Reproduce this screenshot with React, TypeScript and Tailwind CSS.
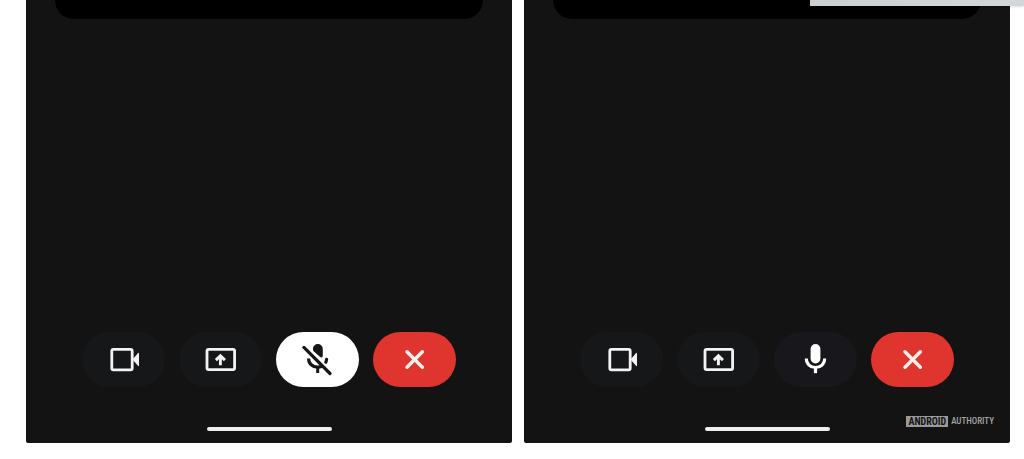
import React from 'react';
import clsx from 'clsx';

const iconClass = 'h-[31px] w-[33px] overflow-visible';

const CameraIcon = () => (
  <svg viewBox="0 0 33 31" className={iconClass} fill="none" aria-hidden="true">
    <rect x="4.8" y="5.3" width="20.4" height="20.6" rx="1.6" stroke="currentColor" strokeWidth="2.8" />
    <path d="M25.5 15.5L31 9.2Q32 8.3 32 9.6V21.4Q32 22.7 31 21.8Z" fill="currentColor" />
  </svg>
);

const PresentIcon = () => (
  <svg viewBox="0 0 33 31" className={iconClass} fill="none" stroke="currentColor" aria-hidden="true">
    <rect x="3" y="5.4" width="27.6" height="20.2" rx="1.6" strokeWidth="2.8" />
    <path d="M16.4 21.2V12.2M11.9 16.1L16.4 11.7L20.9 16.1" strokeWidth="2.9" />
  </svg>
);

const MicIcon = () => (
  <svg viewBox="0 0 33 31" className={iconClass} fill="none" stroke="currentColor" aria-hidden="true">
    <rect x="11.6" y="0" width="9.8" height="19.4" rx="4.9" fill="currentColor" stroke="none" />
    <path d="M7.3 14.6C7.3 19.8 11.4 23.6 16.5 23.6S25.7 19.8 25.7 14.6" strokeWidth="3" />
    <path d="M16.5 23.4V29.2" strokeWidth="3.2" />
  </svg>
);

const MicOffIcon = () => (
  <svg viewBox="0 0 33 31" className={iconClass} fill="none" stroke="currentColor" aria-hidden="true">
    <path
      d="M11.9 5A4.95 4.95 0 0 1 21.8 5V11.6Q21.8 13.5 20.3 13.5Q19.5 13.4 18.6 12.5L12.6 7.2Q11.9 6.4 11.9 5Z"
      fill="currentColor"
      stroke="none"
    />
    <path d="M7.6 14.4C7.6 19.6 11.5 23.2 16.7 23.2C18.2 23.2 19.6 22.9 20.8 22.3" strokeWidth="3.2" />
    <path d="M25.6 15.4Q25.4 17 24.8 18.2" strokeWidth="3.2" strokeLinecap="round" />
    <path d="M16.7 23.2V29" strokeWidth="3" />
    <path d="M2.9 3.4L29 29.5" strokeWidth="3.2" strokeLinecap="round" />
  </svg>
);

const CloseIcon = () => (
  <svg viewBox="0 0 33 31" className={iconClass} fill="none" stroke="currentColor" aria-hidden="true">
    <path d="M9 7.8L24.4 23.2M24.4 7.8L9 23.2" strokeWidth="3.4" strokeLinecap="round" />
  </svg>
);

interface ControlProps extends React.ButtonHTMLAttributes<HTMLButtonElement> {
  label: string;
}

const Control: React.FC<ControlProps> = ({ label, className, children, ...rest }) => (
  <button
    type="button"
    aria-label={label}
    className={clsx('flex h-[55px] w-[83px] shrink-0 items-center justify-center rounded-full', className)}
    {...rest}
  >
    {children}
  </button>
);

const CallScreen: React.FC<{ initialMuted: boolean; children?: React.ReactNode }> = ({ initialMuted, children }) => {
  const [muted, setMuted] = React.useState(initialMuted);

  return (
    <section className="relative flex min-w-0 flex-1 flex-col rounded-b-xs bg-[#131313]">
      <div className="mx-[29px] h-[19px] rounded-b-[20px] bg-black" />
      <div className="mt-[313px] flex justify-center gap-[14px]">
        <Control label="Camera" className="bg-[#161719] text-[#f4f2f7]">
          <CameraIcon />
        </Control>
        <Control label="Share screen" className="bg-[#161719] text-[#f4f2f7]">
          <PresentIcon />
        </Control>
        <Control
          label="Mute"
          aria-pressed={muted}
          onClick={() => setMuted(!muted)}
          className={muted ? 'bg-white text-[#17171a]' : 'bg-[#18181c] text-white'}
        >
          {muted ? <MicOffIcon /> : <MicIcon />}
        </Control>
        <Control label="End call" className="bg-[#e0352f] text-[#fdf1ee]">
          <CloseIcon />
        </Control>
      </div>
      <div className="mx-auto mt-10 mb-3 h-1 w-[125px] rounded-full bg-[#eeeeee]" />
      {children}
    </section>
  );
};

const App: React.FC = () => {
  return (
    <main className="relative flex gap-3 bg-white pr-[14px] pb-4 pl-[26px]">
      <CallScreen initialMuted={true} />
      <CallScreen initialMuted={false}>
        <div className="absolute right-4 bottom-4 flex items-center gap-[3px] font-['Liberation_Sans_Narrow','Roboto_Condensed','Roboto',sans-serif] leading-[11px]">
          <span className="bg-[#9a9a9a] px-0.5 text-[10px] font-bold text-[#131313]">ANDROID</span>
          <span className="text-[9px] font-medium text-[#a3a3a3]">AUTHORITY</span>
        </div>
      </CallScreen>
      <div className="absolute top-0 right-0 h-1.5 w-[214px] bg-linear-to-r from-[#cbced3] to-[#d3d6da] shadow-sm" />
    </main>
  );
};

export default App;
